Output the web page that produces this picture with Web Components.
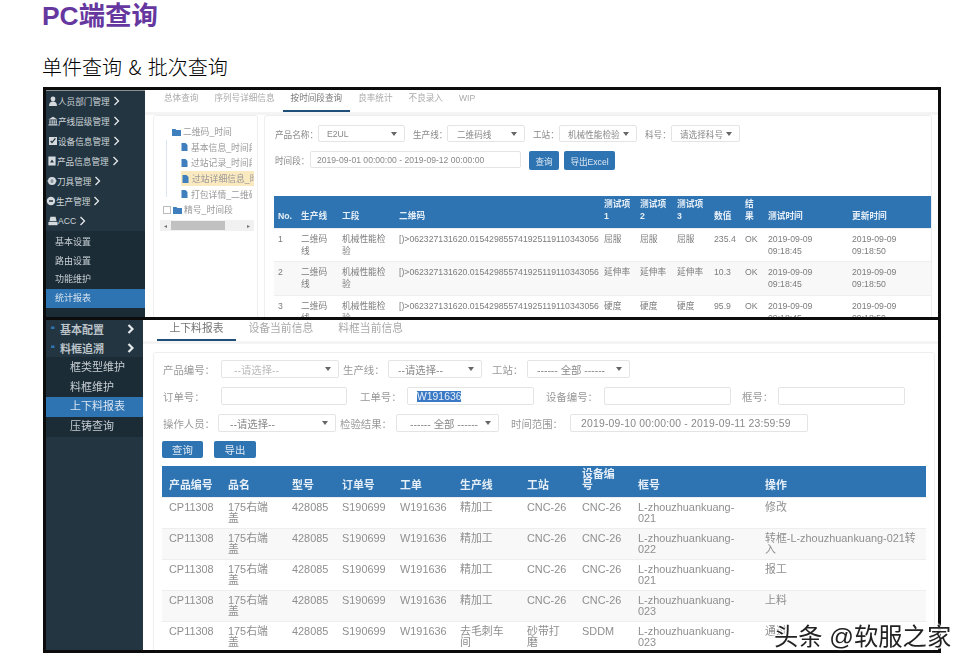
<!DOCTYPE html>
<html lang="zh">
<head>
<meta charset="utf-8">
<title>PC端查询</title>
<style>
	html, body { margin: 0; background: #fff; }
	body { font-family: "Liberation Sans", "Noto Sans CJK SC", sans-serif; }
</style>
</head>
<body>
<doc-page>
	<span slot="title">PC端查询</span>
	<span slot="subtitle">单件查询 &amp; 批次查询</span>

	<!-- 上半部分 : 按时间段查询 -->
	<shot-frame style="--frame-h:227px" first>
		<side-nav slot="side" style="--w:99px;--fs:8.6px;--sub-fs:9px;--strip:1px">
			<nav-item icon="person" x="12" cx="3">人员部门管理</nav-item>
			<nav-item icon="bank" x="12" cx="3">产线层级管理</nav-item>
			<nav-item icon="check" x="12" cx="3">设备信息管理</nav-item>
			<nav-item icon="file" x="11" cx="3">产品信息管理</nav-item>
			<nav-item icon="ring" x="11" cx="3">刀具管理</nav-item>
			<nav-item icon="gear" x="10" cx="3">生产管理</nav-item>
			<nav-item icon="printer" x="12" cx="3">ACC</nav-item>
			<sub-nav>
				<span>基本设置</span>
				<span>路由设置</span>
				<span>功能维护</span>
				<span class="on">统计报表</span>
			</sub-nav>
		</side-nav>
		<tab-bar slot="tabs" style="--fs:8.6px;--h:22px;--tab-lh:17px;--pad:8px;--start:11px;--line:#1f4e79">
			<a>总体查询</a><a>序列号详细信息</a><a active>按时间段查询</a><a>良率统计</a><a>不良录入</a><a>WIP</a>
		</tab-bar>
		<div slot="body" style="display:flex;gap:6px;padding:0 0 0 8px">
			<tree-panel></tree-panel>
			<card-box style="width:668px;--pad:9px 0 0 9px">
				<form-row style="--fs:8.6px;--h:17px;margin-left:1px">
					<form-field label="产品名称：" lw="43" cw="87" type="select" value="E2UL" indent="8"></form-field>
					<form-field label="生产线：" lw="34" cw="78" type="select" value="二维码线" gap="8" indent="9"></form-field>
					<form-field label="工站：" lw="26" cw="78" type="select" value="机械性能检验" gap="8" indent="8"></form-field>
					<form-field label="科号：" lw="26" cw="69" type="select" value="请选择科号" gap="8" indent="8"></form-field>
				</form-row>
				<form-row style="--fs:8.6px;--h:17px;margin-top:9px;margin-left:1px">
					<form-field label="时间段：" lw="35" cw="211" type="input" value="2019-09-01 00:00:00 - 2019-09-12 00:00:00" indent="6"></form-field>
					<blue-btn style="--w:30px;--h:19px;margin-left:8px">查询</blue-btn>
					<blue-btn style="--w:51px;--h:19px;margin-left:5px">导出Excel</blue-btn>
				</form-row>
				<data-table id="t1" style="margin-top:28px;--fs:8.7px;--lh:12.4px;--pad-x:4px;--row-pad:4px;--row-h:33.5px;--head-h:32px;--color:#7c7c7c"></data-table>
			</card-box>
		</div>
	</shot-frame>

	<!-- 下半部分 : 上下料报表 -->
	<shot-frame style="--frame-h:330px">
		<side-nav slot="side" style="--w:97px;--fs:11px;--sub-fs:11px;--row:18.5px;--sub-row:19.5px;--sub-x:24px;--sub-top:1px;--sub-bottom:1px;--nav-color:#bcc4c9">
			<nav-item icon="dot" x="14" cx="23" plain>基本配置</nav-item>
			<nav-item icon="dot" x="14" cx="23" plain>料框追溯</nav-item>
			<sub-nav>
				<span>框类型维护</span>
				<span>料框维护</span>
				<span class="on">上下料报表</span>
				<span>压铸查询</span>
			</sub-nav>
		</side-nav>
		<tab-bar slot="tabs" style="--fs:10.8px;--h:21px;--tab-lh:16px;--pad:12.5px;--start:14px;--line:#1f4e79">
			<a active>上下料报表</a><a>设备当前信息</a><a>料框当前信息</a>
		</tab-bar>
		<div slot="body" style="padding:8px 0 0 10px">
			<card-box style="width:782px;--pad:7px 0 0 9px">
				<form-row style="--fs:10.4px;--h:18px;--color:#999">
					<form-field label="产品编号：" lw="58" cw="118" type="select" value="--请选择--" indent="12" muted></form-field>
					<form-field label="生产线：" lw="45" cw="94" type="select" value="--请选择--" gap="4" indent="9"></form-field>
					<form-field label="工站：" lw="35" cw="103" type="select" value="------ 全部 ------" gap="10" indent="9"></form-field>
				</form-row>
				<form-row style="--fs:10.4px;--h:18px;--color:#999;margin-top:9px">
					<form-field label="订单号：" lw="58" cw="126" type="input"></form-field>
					<form-field label="工单号：" lw="47" cw="127" type="input" value="W191636" gap="13" indent="9" picked></form-field>
					<form-field label="设备编号：" lw="58" cw="127" type="input" gap="12"></form-field>
					<form-field label="框号：" lw="36" cw="127" type="input" gap="11"></form-field>
				</form-row>
				<form-row style="--fs:10.4px;--h:18px;--color:#999;margin-top:9px">
					<form-field label="操作人员：" lw="55" cw="118" type="select" value="--请选择--" indent="11"></form-field>
					<form-field label="检验结果：" lw="56" cw="103" type="select" value="------ 全部 ------" gap="4" indent="13"></form-field>
					<form-field label="时间范围：" lw="59" cw="238" type="input" value="2019-09-10 00:00:00 - 2019-09-11 23:59:59" gap="12" indent="10" wide></form-field>
				</form-row>
				<form-row style="--fs:10.4px;--h:17px;margin-top:9px;margin-left:-1px">
					<blue-btn style="--w:41px;--h:17px">查询</blue-btn>
					<blue-btn style="--w:42px;--h:17px;margin-left:11px">导出</blue-btn>
				</form-row>
				<data-table id="t2" style="margin-top:8px;margin-left:-1px;--fs:10.9px;--lh:11.5px;--pad-x:7px;--row-pad:4px;--row-h:31px;--head-h:31px;--color:#8f8f8f"></data-table>
			</card-box>
		</div>
	</shot-frame>

	<span slot="mark">头条 @软服之家</span>
</doc-page>

<script>
const ICONS = {
	person: '<circle cx="5" cy="3" r="2.4"/><path d="M1 10c0-3 1.6-4.4 4-4.4S9 7 9 10z"/>',
	bank: '<path d="M5 .8 9.6 3.4H.4z"/><path d="M1.4 4.2h1.2v3.6H1.4zM3.6 4.2h1.2v3.6H3.6zM5.6 4.2h1.2v3.6H5.6zM7.6 4.2h1.2v3.6H7.6zM.5 8.2h9v1.4h-9z"/>',
	check: '<path fill-rule="evenodd" d="M1 1h8v8H1zM2.2 5.4 4 7.4l3.9-4.6-1-.8L4 5.4l-1-1z"/>',
	file: '<path fill-rule="evenodd" d="M1.4.6h7.2v9H1.4zM5 3.4 3 6.6h4z"/>',
	ring: '<path fill-rule="evenodd" d="M5 1a4 4 0 1 0 0 8 4 4 0 0 0 0-8zm0 2.4a1.6 1.6 0 1 1 0 3.2 1.6 1.6 0 0 1 0-3.2z"/><path d="M.4 4.4h9.2v1.2H.4z"/>',
	gear: '<path fill-rule="evenodd" d="M5 .8a4.2 4.2 0 1 0 0 8.4 4.2 4.2 0 0 0 0-8.4zM3 4.2h4v1.6H3z"/>',
	printer: '<path d="M2.4.8h5.2l1 4.4H1.4z"/><path d="M.4 6h9.2v3.2H.4z"/>',
	dot: '<path d="M1 2.5h3.5v2.5H1z" fill="#2f74b2"/>'
};

// 페이지 전체 : 标题 + 两张截图 + 水印
class DocPage extends HTMLElement {
	constructor() {
		super();
		this.attachShadow({mode: "open"});
		this.shadowRoot.innerHTML = `
			<style>
				:host{ display:block; position:relative; height:668px; padding-left:42px; overflow:hidden;
					font-family:"Liberation Sans","Noto Sans CJK SC",sans-serif; }
				h1{ margin:0; padding-top:1px; height:42px; font-size:26.4px; line-height:30px; color:#66389f; font-weight:700; }
				h2{ margin:0; height:44px; font-family:"Noto Sans CJK SC",sans-serif; font-size:20px; line-height:48px; color:#000; font-weight:300; word-spacing:2px; }
				.shots{ width:898px; margin-left:1px; }
				.mark{ position:absolute; left:774px; top:621px; font-size:24.3px; line-height:32px; color:#222; white-space:nowrap;
					text-shadow:0 0 2px #fff,0 0 2px #fff,1px 1px 1px #fff,-1px -1px 1px #fff; }
			</style>
			<h1><slot name="title"></slot></h1>
			<h2><slot name="subtitle"></slot></h2>
			<div class="shots"><slot></slot></div>
			<div class="mark"><slot name="mark"></slot></div>
		`;
	}
}

class ShotFrame extends HTMLElement {
	constructor() {
		super();
		this.attachShadow({mode: "open"});
		this.shadowRoot.innerHTML = `
			<style>
				:host{ display:block; border:3px solid #0c0c0c; border-top-width:0; background:#fff; }
				:host([first]){ border-top-width:3px; }
				.wrap{ display:flex; height:var(--frame-h); overflow:hidden; filter:blur(.6px); }
				.main{ flex:1; min-width:0; }
				.band{ border-top:3px solid #f4f4f4; }
			</style>
			<div class="wrap">
				<slot name="side"></slot>
				<div class="main">
					<slot name="tabs"></slot>
					<div class="band"><slot name="body"></slot></div>
				</div>
			</div>
		`;
	}
}

class SideNav extends HTMLElement {
	constructor() {
		super();
		this.attachShadow({mode: "open"});
		this.shadowRoot.innerHTML = `
			<style>
				:host{ display:block; flex:none; width:var(--w); background:#233541; color:var(--nav-color,#cfd6da); border-top:var(--strip,0) solid #8a8f92; box-sizing:border-box; }
			</style>
			<slot></slot>
		`;
	}
}

class NavItem extends HTMLElement {
	constructor() {
		super();
		this.attachShadow({mode: "open"});
	}
	connectedCallback() {
		const plain = this.hasAttribute('plain');
		const x = this.getAttribute('x');
		const cx = this.getAttribute('cx');
		this.shadowRoot.innerHTML = `
			<style>
				:host{ display:block; }
				.row{ display:flex; align-items:center; height:var(--row,20px); font-size:var(--fs); font-weight:${plain ? 700 : 400}; }
				svg.icon{ flex:none; width:10px; height:10px; fill:#d5dade; margin-left:${x - 10}px; }
				.chev{ flex:none; width:7px; height:10px; margin-left:${cx}px; fill:none; stroke:#e6eaec; stroke-width:${plain ? 2.2 : 1.3}; }
			</style>
			<div class="row">
				<svg class="icon" viewBox="0 0 10 10">${ICONS[this.getAttribute('icon')]}</svg>
				<span><slot></slot></span>
				<svg class="chev" viewBox="0 0 7 10"><path d="M1.5 1 5.5 5l-4 4"/></svg>
			</div>
		`;
	}
}

class SubNav extends HTMLElement {
	constructor() {
		super();
		this.attachShadow({mode: "open"});
		this.shadowRoot.innerHTML = `
			<style>
				:host{ display:block; background:#1b2c37; padding:var(--sub-top,2px) 0 var(--sub-bottom,11px); font-size:var(--sub-fs); }
				::slotted(span){ display:block; height:var(--sub-row,18.7px); line-height:var(--sub-row,18.7px); padding-left:var(--sub-x,9px); color:#c6cdd2; }
				::slotted(.on){ background:#2f74b2; color:#d7e4f0; }
			</style>
			<slot></slot>
		`;
	}
}

class TabBar extends HTMLElement {
	constructor() {
		super();
		this.attachShadow({mode: "open"});
		this.shadowRoot.innerHTML = `
			<style>
				:host{ display:flex; height:var(--h); padding-left:var(--start); font-size:var(--fs); color:#aaa; box-sizing:border-box; }
				::slotted(a){ display:block; padding:0 var(--pad); line-height:var(--tab-lh); white-space:nowrap; }
				::slotted(a[active]){ color:#777; box-shadow:inset 0 -2px 0 var(--line); }
			</style>
			<slot></slot>
		`;
	}
}

class CardBox extends HTMLElement {
	constructor() {
		super();
		this.attachShadow({mode: "open"});
		this.shadowRoot.innerHTML = `
			<style>
				:host{ display:block; flex:none; box-sizing:border-box; height:700px; padding:var(--pad); border:1px solid #eee; border-radius:3px; background:#fff; }
			</style>
			<slot></slot>
		`;
	}
}

class FormRow extends HTMLElement {
	constructor() {
		super();
		this.attachShadow({mode: "open"});
		this.shadowRoot.innerHTML = `
			<style>
				:host{ display:flex; align-items:flex-start; font-size:var(--fs); height:var(--h); color:var(--color,#888); }
			</style>
			<slot></slot>
		`;
	}
}

class FormField extends HTMLElement {
	constructor() {
		super();
		this.attachShadow({mode: "open"});
	}
	connectedCallback() {
		const g = (n, d) => this.hasAttribute(n) ? this.getAttribute(n) : d;
		const isSelect = g('type') === 'select';
		const picked = this.hasAttribute('picked');
		const wide = this.hasAttribute('wide');
		this.shadowRoot.innerHTML = `
			<style>
				:host{ display:flex; align-items:center; height:var(--h); margin-left:${g('gap', 0)}px; }
				.label{ width:${g('lw')}px; flex:none; white-space:nowrap; overflow:hidden; }
				.ctl{ width:${g('cw')}px; height:var(--h); flex:none; box-sizing:border-box; display:flex; align-items:center;
					border:1px solid #e4e4e4; border-radius:2px; padding-left:${g('indent', 0)}px; color:${this.hasAttribute('muted') ? '#bbb' : '#888'}; white-space:nowrap; overflow:hidden; position:relative; }
				.val{ ${wide ? 'letter-spacing:.2px;' : ''} }
				.val.picked{ background:#3a79c4; color:#e8f0fa; }
				.arrow{ position:absolute; right:7px; top:50%; margin-top:-2px; border:3px solid transparent; border-top:4px solid #666; border-bottom:0; }
			</style>
			<span class="label">${g('label', '')}</span>
			<div class="ctl">
				<span class="val ${picked ? 'picked' : ''}">${g('value', '')}</span>
				${isSelect ? '<i class="arrow"></i>' : ''}
			</div>
		`;
	}
}

class BlueBtn extends HTMLElement {
	constructor() {
		super();
		this.attachShadow({mode: "open"});
		this.shadowRoot.innerHTML = `
			<style>
				:host{ display:flex; flex:none; align-items:center; justify-content:center; width:var(--w); height:var(--h); background:#2f74b2; color:#dfeaf4; border-radius:2px; white-space:nowrap; }
			</style>
			<slot></slot>
		`;
	}
}

class TreePanel extends HTMLElement {
	constructor() {
		super();
		this.attachShadow({mode: "open"});
		const folder = '<svg class="i" viewBox="0 0 9 8"><path d="M0 1h3.4l1 1H9v6H0z"/></svg>';
		const file = '<svg class="i f" viewBox="0 0 7 8"><path d="M.5 0h4l2 2v6h-6z"/></svg>';
		this.shadowRoot.innerHTML = `
			<style>
				:host{ display:block; flex:none; position:relative; width:105px; height:700px; box-sizing:border-box; border:1px solid #eee; border-radius:3px; padding:8px 5px 0 6px; font-size:8.8px; color:#999; overflow:hidden; }
				.r{ display:flex; align-items:center; height:15.6px; white-space:nowrap; overflow:hidden; }
				.i{ width:9px; height:8px; fill:#3f7fbd; flex:none; margin-right:2px; }
				.i.f{ width:7px; margin-right:3px; }
				.top{ padding-left:12px; }
				.kid{ padding-left:21px; }
				.sel{ background:#fbe9c0; margin-left:21px; padding-left:1px; width:73px; box-sizing:border-box; }
				.plus{ width:6px; height:6px; border:1px solid #bbb; flex:none; margin-left:3px; margin-right:2px; }
				.bar{ display:flex; align-items:center; height:11px; background:#f1f1f1; margin-top:2px; width:94px; }
				.bar i{ width:11px; text-align:center; font-size:6px; font-style:normal; color:#777; flex:none; }
				.bar b{ width:54px; height:9px; background:#c1c1c1; display:block; margin-right:18px; }
				.guide{ position:absolute; left:12px; top:24px; height:57px; border-left:1px solid #dbe6f0; }
			</style>
			<div class="guide"></div>
			<div class="r top">${folder}二维码_时间</div>
			<div class="r kid">${file}基本信息_时间段</div>
			<div class="r kid">${file}过站记录_时间段</div>
			<div class="r sel">${file}过站详细信息_时</div>
			<div class="r kid">${file}打包详情_二维码</div>
			<div class="r"><i class="plus"></i>${folder}精号_时间段</div>
			<div class="bar"><i>◂</i><b></b><i>▸</i></div>
		`;
	}
}

class DataTable extends HTMLElement {
	constructor() {
		super();
		this.attachShadow({mode: "open"});
	}
	// cols : [이름, 폭]
	setData(cols, rows) {
		const head = cols.map(c => `<th style="width:${c[1]}px">${c[0]}</th>`).join('');
		const body = rows.map(r => `<tr>${r.map(v => `<td>${v}</td>`).join('')}</tr>`).join('');
		this.shadowRoot.innerHTML = `
			<style>
				:host{ display:block; font-size:var(--fs); line-height:var(--lh); color:var(--color); }
				table{ border-collapse:collapse; table-layout:fixed; width:max-content; }
				th{ background:#2f74b2; color:#e6eff7; font-weight:700; text-align:left; vertical-align:bottom; height:var(--head-h); padding:0 0 5px var(--pad-x); box-sizing:border-box; white-space:nowrap; }
				td{ vertical-align:top; height:var(--row-h); box-sizing:border-box; padding:var(--row-pad) 0 0 var(--pad-x); border-top:1px solid #eee; white-space:nowrap; }
				tr:nth-child(even) td{ background:#f8f8f8; }
			</style>
			<table><thead><tr>${head}</tr></thead><tbody>${body}</tbody></table>
		`;
	}
}

customElements.define('doc-page', DocPage);
customElements.define('shot-frame', ShotFrame);
customElements.define('side-nav', SideNav);
customElements.define('nav-item', NavItem);
customElements.define('sub-nav', SubNav);
customElements.define('tab-bar', TabBar);
customElements.define('card-box', CardBox);
customElements.define('form-row', FormRow);
customElements.define('form-field', FormField);
customElements.define('blue-btn', BlueBtn);
customElements.define('tree-panel', TreePanel);
customElements.define('data-table', DataTable);

const QR = '[)&gt;062327131620.015429855741925119110343056';
const line = (n, v, num) => [n, '二维码<br>线', '机械性能检<br>验', QR, v, v, v, num, 'OK', '2019-09-09<br>09:18:45', '2019-09-09<br>09:18:50'];
document.getElementById('t1').setData(
	[['No.', 23], ['生产线', 41], ['工段', 57], ['二维码', 205], ['测试项<br>1', 36], ['测试项<br>2', 37], ['测试项<br>3', 37], ['数值', 31], ['结<br>果', 23], ['测试时间', 84], ['更新时间', 83]],
	[line(1, '屈服', '235.4'), line(2, '延伸率', '10.3'), line(3, '硬度', '95.9')]
);

const part = (a, b, c, d, e) => ['CP11308', '175右端<br>盖', '428085', 'S190699', 'W191636', a, b, c, 'L-zhouzhuankuang-<br>' + d, e];
document.getElementById('t2').setData(
	[['产品编号', 59], ['品名', 64], ['型号', 50], ['订单号', 58], ['工单', 60], ['生产线', 67], ['工站', 55], ['设备编<br>号', 56], ['框号', 127], ['操作', 168]],
	[
		part('精加工', 'CNC-26', 'CNC-26', '021', '修改'),
		part('精加工', 'CNC-26', 'CNC-26', '022', '转框-L-zhouzhuankuang-021转<br>入'),
		part('精加工', 'CNC-26', 'CNC-26', '021', '报工'),
		part('精加工', 'CNC-26', 'CNC-26', '023', '上料'),
		part('去毛刺车<br>间', '砂带打<br>磨', 'SDDM', '023', '通过')
	]
);
</script>
</body>
</html>
